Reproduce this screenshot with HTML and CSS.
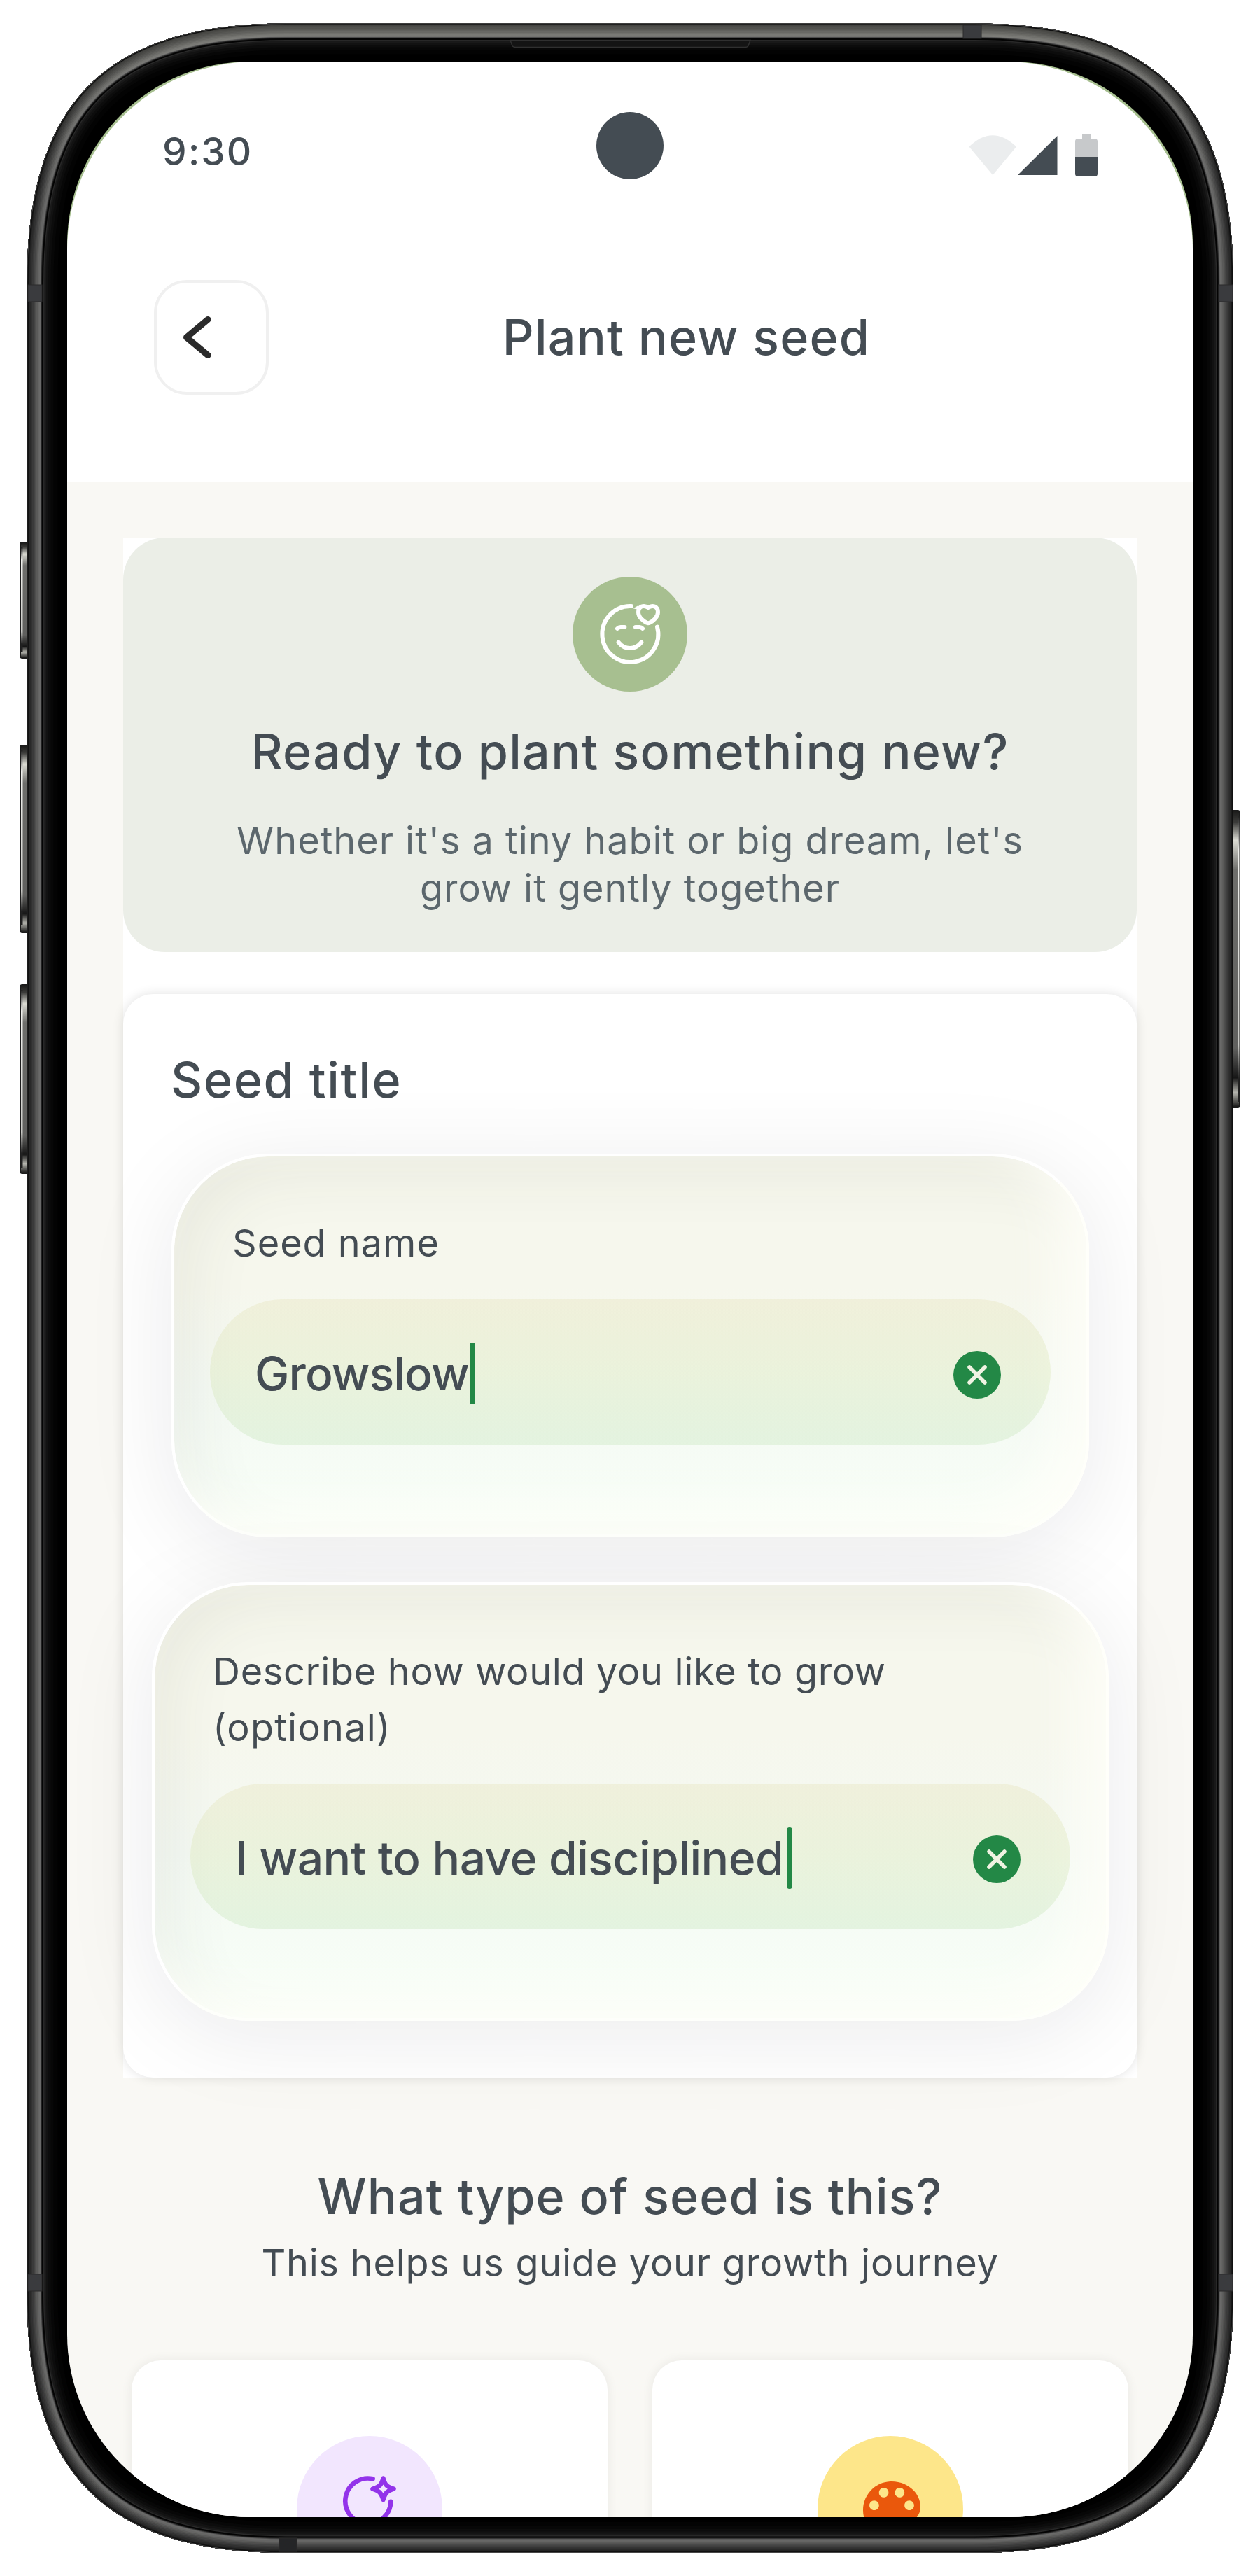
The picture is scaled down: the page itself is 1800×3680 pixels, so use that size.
FILE: index.html
```html
<!DOCTYPE html>
<html lang="en">
<head>
<meta charset="utf-8">
<title>Plant new seed</title>
<link rel="stylesheet" href="styles.css">
</head>
<body>
<div class="device">
  <svg class="frame" viewBox="0 0 1800 3680" aria-hidden="true">
    <defs>
      <path id="body" d="M38.5 403.5C38.5 146.5 151.5 33.5 408.5 33.5H1392C1649 33.5 1762 146.5 1762 403.5V3277C1762 3534 1649 3647 1392 3647H408.5C151.5 3647 38.5 3534 38.5 3277Z"/>
      <clipPath id="bodyClip"><use href="#body"/></clipPath>
      <linearGradient id="shine" gradientUnits="userSpaceOnUse" x1="0" y1="33" x2="0" y2="260">
        <stop offset="0" stop-color="#c8c8b8" stop-opacity=".22"/>
        <stop offset="1" stop-color="#c8c8b8" stop-opacity="0"/>
      </linearGradient>
      <linearGradient id="key" x1="0" y1="0" x2="0" y2="1">
        <stop offset="0" stop-color="#1a1a19"/>
        <stop offset=".04" stop-color="#3c3c3a"/>
        <stop offset=".1" stop-color="#dcdcd4"/>
        <stop offset=".2" stop-color="#6e6e6b"/>
        <stop offset=".8" stop-color="#60605e"/>
        <stop offset=".9" stop-color="#161616"/>
        <stop offset=".95" stop-color="#b5b5ae"/>
        <stop offset="1" stop-color="#111"/>
      </linearGradient>
      <linearGradient id="keyEdge" x1="0" y1="0" x2="0" y2="1">
        <stop offset="0" stop-color="#222"/>
        <stop offset=".12" stop-color="#f0f0ec"/>
        <stop offset=".8" stop-color="#c8c8c4"/>
        <stop offset=".92" stop-color="#222"/>
      </linearGradient>
    </defs>
    <g fill="url(#key)" stroke="#1c1c1c" stroke-width="2">
      <rect x="29" y="775" width="14" height="165" rx="3"/>
      <rect x="29" y="1065" width="14" height="267" rx="3"/>
      <rect x="29" y="1407" width="14" height="269" rx="3"/>
      <rect x="1757" y="1158" width="14" height="424" rx="3"/>
    </g>
    <g fill="url(#keyEdge)">
      <rect x="30" y="782" width="2.5" height="150"/>
      <rect x="30" y="1072" width="2.5" height="250"/>
      <rect x="30" y="1414" width="2.5" height="254"/>
      <rect x="1768" y="1166" width="2.5" height="408"/>
    </g>
    <g clip-path="url(#bodyClip)" fill="none">
      <use href="#body" fill="#000"/>
      <use href="#body" stroke="#030303" stroke-width="88"/>
      <use href="#body" stroke="#070707" stroke-width="76"/>
      <use href="#body" stroke="#0c0c0c" stroke-width="68"/>
      <use href="#body" stroke="#121212" stroke-width="61"/>
      <use href="#body" stroke="#191919" stroke-width="55"/>
      <use href="#body" stroke="#282828" stroke-width="50"/>
      <use href="#body" stroke="#040404" stroke-width="47"/>
      <use href="#body" stroke="#222" stroke-width="43"/>
      <use href="#body" stroke="#4c4c4c" stroke-width="41"/>
      <use href="#body" stroke="#6a6a69" stroke-width="39"/>
      <use href="#body" stroke="#656564" stroke-width="35"/>
      <use href="#body" stroke="#5a5a59" stroke-width="31"/>
      <use href="#body" stroke="#4f4f4e" stroke-width="27"/>
      <use href="#body" stroke="#444" stroke-width="23"/>
      <use href="#body" stroke="#3a3a3a" stroke-width="19"/>
      <use href="#body" stroke="#313131" stroke-width="15"/>
      <use href="#body" stroke="#292929" stroke-width="11"/>
      <use href="#body" stroke="#1f1f1f" stroke-width="7"/>
      <use href="#body" stroke="url(#shine)" stroke-width="38"/>
      <use href="#body" stroke="#101010" stroke-width="4.5"/>
      <use href="#body" stroke="#5a5a5a" stroke-width="1.4"/>
    </g>
    <g fill="#3a3b3e" stroke="#2a2a2b" stroke-width="1">
      <rect x="40" y="407" width="20" height="24"/>
      <rect x="1741" y="407" width="20" height="24"/>
      <rect x="40" y="3249" width="20" height="24"/>
      <rect x="1741" y="3249" width="20" height="24"/>
      <rect x="1376" y="36" width="26" height="19"/>
      <rect x="399" y="3626" width="25" height="19" fill="#242527"/>
    </g>
    <path d="M729 57.5l3 8q1 2 5 2H1064q4 0 5-2l3-8z" fill="#141414" stroke="#303030" stroke-width="1.5"/>
  </svg>

  <main class="screen">
    <header class="top">
      <div class="status">
        <span class="time">9:30</span>
        <span class="camera"></span>
        <svg class="status-icons" viewBox="0 0 184 60" aria-hidden="true">
          <path d="M0.5 17.5Q34 -15 68 17.5L34.300 58z" fill="#ebedee"/>
          <path d="M70 58L126.500 2V58z" fill="#444c53"/>
          <path d="M162 0h12v6h6q4 0 4 4v22h-32V10q0-4 4-4h6z" fill="#c7c9cb"/>
          <path d="M152 32h32v24q0 4-4 4h-24q-4 0-4-4z" fill="#444c53"/>
        </svg>
      </div>
      <nav class="nav">
        <button class="back" aria-label="Back">
          <svg viewBox="0 0 164 164"><path d="M77 56.500L46.500 82 77 107.500"/></svg>
        </button>
        <h1 class="heading nav-title">Plant new seed</h1>
      </nav>
    </header>

    <div class="stack">
      <section class="hero">
        <svg class="face" viewBox="54 54 492 492" aria-hidden="true">
          <circle cx="300" cy="300" r="246" fill="#a7bf90"/>
          <g fill="none" stroke="#fff" stroke-width="18" stroke-linecap="round" stroke-linejoin="round">
            <path d="M306 180H300A120 120 0 1 0 417 269"/>
            <path d="M251 335Q270 360 300 360T349 335"/>
            <path d="M246 276Q252 270 260 270H277M324 270H341Q348 270 354 276"/>
            <path d="M378 186C360 174 336 180 336 206C336 228 360 246 372 251Q378 254 384 251C398 245 420 226 420 206C420 180 396 174 378 186Z"/>
          </g>
          <path d="M314 190L336 177V195Z" fill="#fff"/>
        </svg>
        <h2 class="heading hero-title">Ready to plant something new?</h2>
        <p class="hero-text">Whether it's a tiny habit or big dream, let's<br>grow it gently together</p>
      </section>

      <section class="form">
        <h2 class="heading form-title">Seed title</h2>
        <div class="field field-name">
          <label class="label label-name">Seed name</label>
          <div class="pill">
            <span class="value value-name">Growslow</span><i class="caret"></i>
            <svg class="clear" viewBox="0 0 68 68"><circle cx="34" cy="34" r="34"/><path d="M23 23L45 45M45 23L23 45"/></svg>
          </div>
        </div>
        <div class="field field-about">
          <label class="label label-about">Describe how would you like to grow<br><span class="optional">(optional)</span></label>
          <div class="pill">
            <span class="value value-about">I want to have disciplined</span><i class="caret caret-about"></i>
            <svg class="clear" viewBox="0 0 68 68"><circle cx="34" cy="34" r="34"/><path d="M23 23L45 45M45 23L23 45"/></svg>
          </div>
        </div>
      </section>
    </div>

    <section class="types">
      <h2 class="heading types-title">What type of seed is this?</h2>
      <p class="types-text">This helps us guide your growth journey</p>
      <div class="cards">
        <div class="card">
          <div class="bubble violet">
            <svg viewBox="0 0 208 208" fill="none" stroke="#9333ea" stroke-width="6.600" stroke-linecap="round" stroke-linejoin="round">
              <path d="M108.700 61.300A32.500 32.500 0 1 0 134.300 93.700"/>
              <path d="M123.500 60.500C126 70 129 73 138.500 75.700C129 78.500 126 81.500 123.500 91C121 81.500 118 78.500 108.500 75.700C118 73 121 70 123.500 60.500Z"/>
            </svg>
          </div>
        </div>
        <div class="card">
          <div class="bubble amber">
            <svg viewBox="0 0 208 208"><path transform="translate(51.300 51.300) scale(4.556)" fill="#ea580c" d="M12 3c-4.970 0-9 4.030-9 9s4.030 9 9 9c.83 0 1.500-.67 1.500-1.500 0-.39-.15-.74-.39-1.010-.23-.26-.38-.61-.38-.99 0-.83.67-1.500 1.500-1.500H16c2.760 0 5-2.240 5-5 0-4.420-4.030-8-9-8zm-5.500 9c-.83 0-1.500-.67-1.500-1.500S5.670 9 6.500 9 8 9.670 8 10.500 7.330 12 6.500 12zm3-4C8.670 8 8 7.330 8 6.500S8.670 5 9.500 5s1.500.67 1.500 1.500S10.330 8 9.500 8zm5 0c-.83 0-1.500-.67-1.500-1.500S13.670 5 14.500 5s1.500.67 1.500 1.500S15.330 8 14.500 8zm3 4c-.83 0-1.500-.67-1.500-1.500S16.670 9 17.500 9s1.500.67 1.500 1.500-.67 1.500-1.500 1.500z"/></svg>
          </div>
        </div>
      </div>
    </section>
  </main>
</div>
</body>
</html>
```
FILE: styles.css
```css
* { box-sizing: border-box; margin: 0; padding: 0; }

body {
  background: #fff;
  color: #444c53;
  font-family: Inter, "Liberation Sans", sans-serif;
}

.device {
  position: relative;
  width: 1800px;
  height: 3680px;
  padding: 88px 96px 84px;
  overflow: hidden;
}

.frame {
  position: absolute;
  inset: 0;
  width: 1800px;
  height: 3680px;
}

.screen {
  position: relative;
  height: 3508px;
  overflow: hidden;
  border-radius: 261px;
  background: linear-gradient(#a7bf90 0 500px, #f9f8f4 500px);
}

/* Status bar and navigation */
.top {
  height: 600px;
  background: #fff;
  border-radius: 269px 269px 0 0;
}

.status {
  display: grid;
  grid-template-columns: 1fr 96px 1fr;
  align-items: start;
  padding: 72px 136px 0;
}

.time {
  padding-top: 16px;
  font-size: 55px;
  font-weight: 500;
  line-height: 80px;
  letter-spacing: 2px;
}

.camera {
  width: 96px;
  height: 96px;
  border-radius: 50%;
  background: #444c53;
}

.status-icons {
  width: 184px;
  height: 60px;
  margin-top: 32px;
  justify-self: end;
}

.nav {
  display: flex;
  align-items: center;
  padding: 144px 127px 0 124px;
}

.back {
  width: 164px;
  height: 164px;
  border: 4px solid #f0f0f0;
  border-radius: 47px;
  background: #fff;
}

.back svg {
  display: block;
  width: 164px;
  height: 164px;
  margin: -4px;
  fill: none;
  stroke: #2b2b2b;
  stroke-width: 9;
  stroke-linecap: round;
  stroke-linejoin: round;
}

.heading {
  font-size: 70px;
  font-weight: 500;
  line-height: 84px;
}

.nav-title {
  flex: 1;
  text-align: center;
  letter-spacing: 1.18px;
}

/* Intro card */
.stack {
  padding: 80px 80px 0;
  background: linear-gradient(#fff, #fff) 80px 80px / 1448px 100% no-repeat #f9f8f4;
}

.hero {
  height: 592px;
  padding-top: 56px;
  border-radius: 60px;
  background: #ebeee7;
  text-align: center;
}

.face {
  display: block;
  width: 164px;
  height: 164px;
  margin: 0 auto;
}

.hero-title {
  margin-top: 44px;
  letter-spacing: 1.28px;
}

.hero-text {
  margin-top: 51px;
  color: #5c676d;
  font-size: 54px;
  line-height: 67.5px;
  letter-spacing: .97px;
}

/* Form */
.form {
  position: relative;
  height: 1548px;
  margin-top: 60px;
  padding: 81px 40px 0 41px;
  border-radius: 43px;
  background: #fff;
  box-shadow: 0 0 16px rgba(0, 0, 0, .12);
}

.form-title {
  padding-left: 27px;
  letter-spacing: 1.68px;
}

.field {
  position: relative;
  padding: 84px 51px 0;
  border: 4px solid #fff;
  border-right-color: #fffffa;
  border-bottom-color: #fefffb;
  border-radius: 138px;
  background: linear-gradient(#f6f7ed 0, #f6f7ed 35%, #f4f9f3 62%, #f8fff8 100%);
  background-clip: padding-box;
  box-shadow:
    inset -40px -30px 70px rgba(255, 255, 249, .9),
    inset 26px 26px 90px rgba(60, 60, 40, .065),
    0 20px 130px rgba(20, 20, 30, .085);
}

.field-name {
  height: 548px;
  margin: 63px 28px 0;
}

.field-about {
  height: 627px;
  margin-top: 64px;
}

.label {
  display: block;
  padding-left: 32px;
  font-size: 54px;
  line-height: 80px;
}

.label-name { letter-spacing: 1px; }
.label-about { letter-spacing: .67px; }
.optional { letter-spacing: 1.23px; }

.pill {
  display: flex;
  align-items: center;
  height: 208px;
  margin-top: 40px;
  padding: 4px 71px 0 64px;
  border-radius: 104px;
  background: linear-gradient(rgba(228, 224, 180, .33), rgba(216, 230, 178, .35) 50%, rgba(190, 226, 180, .33));
}

.value {
  font-size: 66px;
  font-weight: 500;
  line-height: 84px;
  white-space: nowrap;
}

.value-name { letter-spacing: -.86px; }
.value-about { letter-spacing: -.53px; }

.caret {
  width: 8px;
  height: 88px;
  margin-left: 1px;
  border-radius: 4px;
  background: #238846;
}

.caret-about { margin-left: 5px; }

.clear {
  width: 68px;
  height: 68px;
  margin: 4px 0 0 auto;
}

.clear circle { fill: #238846; }

.clear path {
  stroke: #f0f3e2;
  stroke-width: 5.5;
  stroke-linecap: round;
}

/* Seed types */
.types {
  height: 700px;
  padding: 128px 92px 0;
  text-align: center;
}

.types-title { letter-spacing: 1.09px; }

.types-text {
  margin-top: 19px;
  font-size: 54px;
  line-height: 67.5px;
  letter-spacing: .76px;
}

.cards {
  display: grid;
  grid-template-columns: 1fr 1fr;
  gap: 64px;
  margin-top: 105px;
}

.card {
  height: 480px;
  padding-top: 108px;
  border-radius: 42px;
  background: #fff;
  box-shadow: 0 0 16px rgba(0, 0, 0, .07);
}

.bubble {
  width: 208px;
  height: 208px;
  margin: 0 auto;
  border-radius: 50%;
}

.bubble svg { display: block; width: 208px; height: 208px; }
.violet { background: #f2e6fe; }
.amber { background: #fde68a; }
```
